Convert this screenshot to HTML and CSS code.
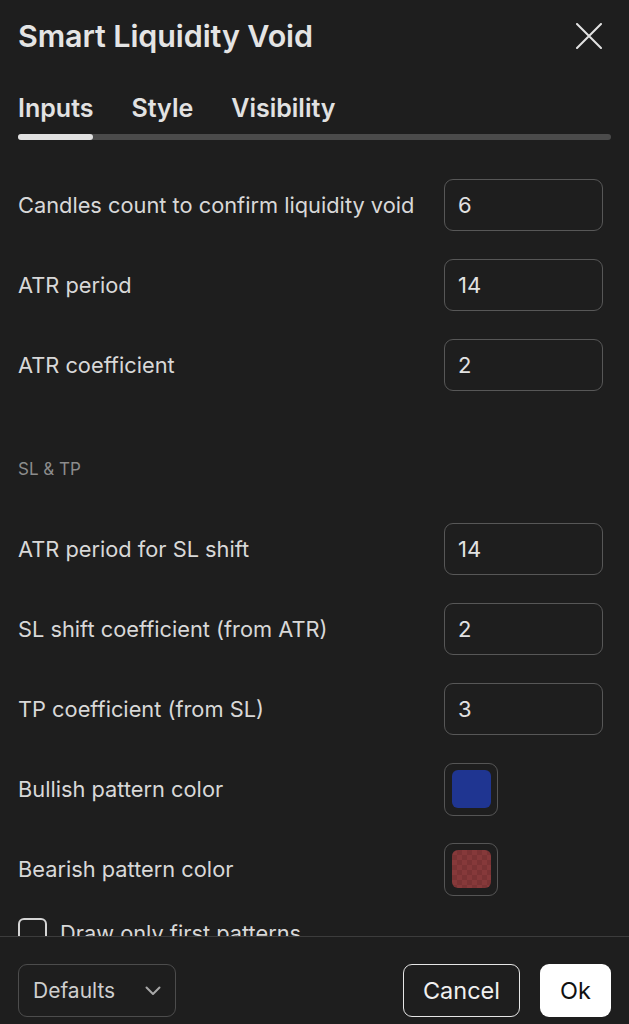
FILE: index.html
```html
<!DOCTYPE html>
<html lang="en">
<head>
<meta charset="utf-8">
<title>Smart Liquidity Void</title>
<link rel="stylesheet" href="styles.css">
</head>
<body>
<div class="dialog">
  <header class="header">
    <h1 class="title">Smart Liquidity Void</h1>
    <button class="close" aria-label="Close">
      <svg width="26" height="26" viewBox="0 0 26 26"><path d="M1 1L25 25M25 1L1 25" stroke="#e2e2e2" stroke-width="2" fill="none" stroke-linecap="round"/></svg>
    </button>
  </header>
  <nav class="tabs">
    <div class="tab-labels">
      <span class="tab active">Inputs</span>
      <span class="tab">Style</span>
      <span class="tab">Visibility</span>
    </div>
    <div class="track"><div class="thumb"></div></div>
  </nav>
  <main class="content">
    <div class="row"><span class="label">Candles count to confirm liquidity void</span><div class="field">6</div></div>
    <div class="row"><span class="label">ATR period</span><div class="field">14</div></div>
    <div class="row"><span class="label">ATR coefficient</span><div class="field">2</div></div>
    <div class="section">SL &amp; TP</div>
    <div class="row"><span class="label">ATR period for SL shift</span><div class="field">14</div></div>
    <div class="row"><span class="label">SL shift coefficient (from ATR)</span><div class="field">2</div></div>
    <div class="row"><span class="label">TP coefficient (from SL)</span><div class="field">3</div></div>
    <div class="row"><span class="label">Bullish pattern color</span><div class="swatch"><div class="chip bull"></div></div></div>
    <div class="row"><span class="label">Bearish pattern color</span><div class="swatch"><div class="chip bear"></div></div></div>
    <div class="check-row"><span class="checkbox"></span><span class="label">Draw only first patterns</span></div>
  </main>
  <footer class="footer">
    <div class="select"><span>Defaults</span>
      <svg width="16" height="10" viewBox="0 0 16 10"><path d="M1.5 1.5L8 8L14.5 1.5" stroke="#a8a8a8" stroke-width="2" fill="none" stroke-linecap="round" stroke-linejoin="round"/></svg>
    </div>
    <div class="actions">
      <button class="btn cancel">Cancel</button>
      <button class="btn ok">Ok</button>
    </div>
  </footer>
</div>
</body>
</html>
```
FILE: styles.css
```css
* { box-sizing: border-box; }
html, body { margin: 0; padding: 0; background: #1e1e1e; }
body { font-family: Inter, "Noto Sans", "Liberation Sans", sans-serif; color: #dcdcdc; }
.dialog { width: 629px; height: 1024px; display: flex; flex-direction: column; overflow: hidden; }
.header { display: flex; align-items: center; justify-content: space-between; padding: 12px 27px 0 18px; height: 60px; }
.title { margin: 0; font-size: 30.5px; font-weight: 600; color: #e4e4e4; letter-spacing: -0.1px; line-height: 36px; }
.close { background: none; border: 0; padding: 0; width: 26px; height: 26px; display: flex; }
.tabs { padding: 33px 18px 0 18px; }
.tab-labels { display: flex; gap: 38px; height: 32px; align-items: flex-start; }
.tab { font-size: 25px; font-weight: 600; color: #e2e2e2; line-height: 30px; letter-spacing: 0; }
.track { height: 6px; border-radius: 3px; background: #4b4b4b; margin-top: 9px; }
.thumb { width: 75px; height: 6px; border-radius: 3px; background: #e1e1e1; }
.content { flex: 1; overflow: hidden; padding: 39px 18px 0 18px; display: flex; flex-direction: column; gap: 28px; }
.row { display: flex; align-items: center; justify-content: space-between; height: 52px; flex-shrink: 0; }
.label { font-size: 21.8px; color: #d8d8d8; letter-spacing: 0; }
.field { width: 159px; height: 52px; border: 1.5px solid #575757; border-radius: 9px; padding-left: 13px; display: flex; align-items: center; font-size: 22px; color: #e2e2e2; margin-right: 8px; }
.section { font-size: 17px; color: #8c8c8c; height: 76px; padding-top: 40px; flex-shrink: 0; line-height: 20px; }
.swatch { width: 54px; height: 53px; border: 1.5px solid #555; border-radius: 9px; display: flex; align-items: center; justify-content: center; margin-right: 113px; }
.chip { width: 39px; height: 38px; border-radius: 6px; }
.bull { background: #1f3591; }
.bear { background-color: #86393a; background-image: conic-gradient(#7a3334 0 25%, transparent 0 50%, #7a3334 0 75%, transparent 0); background-size: 10px 10px; }
.check-row { display: flex; align-items: center; gap: 13px; flex-shrink: 0; margin-top: -5px; }
.checkbox { width: 29px; height: 29px; border: 2px solid #d4d4d4; border-radius: 6px; flex-shrink: 0; }
.footer { border-top: 1px solid #3c3c3c; padding: 27px 18px 7px 18px; display: flex; justify-content: space-between; align-items: center; height: 88px; flex-shrink: 0; }
.select { width: 158px; height: 53px; border: 1.5px solid #4c4c4c; border-radius: 9px; display: flex; align-items: center; justify-content: space-between; padding: 0 14px 0 14px; font-size: 21px; color: #cfcfcf; }
.actions { display: flex; gap: 20px; }
.btn { font-family: Inter, "Noto Sans", "Liberation Sans", sans-serif; font-size: 23.5px; height: 53px; border-radius: 9px; padding: 0; }
.cancel { width: 117px; background: #1e1e1e; color: #f0f0f0; border: 1.5px solid #e6e6e6; }
.ok { width: 71px; background: #ffffff; color: #111; border: 0; }
```
